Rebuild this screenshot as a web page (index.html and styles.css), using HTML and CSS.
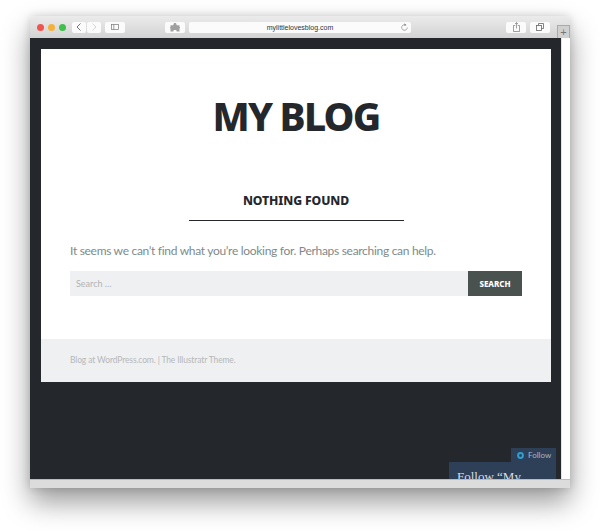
FILE: index.html
```html
<!DOCTYPE html>
<html lang="en">

<head>
  <meta charset="UTF-8">
  <meta name="viewport" content="width=device-width, initial-scale=1.0">
  <title>My Blog</title>
  <link rel="stylesheet" href="styles.css">
</head>

<body>
  <div class="window">
    <div class="toolbar">
      <div class="lights">
        <span class="light red"></span>
        <span class="light yellow"></span>
        <span class="light green"></span>
      </div>
      <div class="nav-group">
        <span class="tool-btn nav-btn">
          <svg width="6" height="8" viewBox="0 0 6 8" fill="none"><path d="M4.5 0.5L1 4L4.5 7.5" stroke="#666" stroke-width="0.9" /></svg>
        </span>
        <span class="tool-btn nav-btn">
          <svg width="6" height="8" viewBox="0 0 6 8" fill="none"><path d="M1.5 0.5L5 4L1.5 7.5" stroke="#cfcfcf" stroke-width="0.9" /></svg>
        </span>
      </div>
      <span class="tool-btn wide-btn sidebar-btn">
        <svg width="8" height="6" viewBox="0 0 8 6" fill="none"><rect x="0.5" y="0.5" width="7" height="5" stroke="#777" stroke-width="0.7" /><path d="M2.8 0.5V5.5" stroke="#777" stroke-width="0.7" /></svg>
      </span>
      <span class="tool-btn wide-btn puzzle-btn">
        <svg width="10" height="9" viewBox="0 0 10 9"><path d="M0.5 2.2H3.5C3.2 1 3.8 0 5 0S6.8 1 6.5 2.2H9.5V4C10.2 3.8 10.2 5.4 9.5 5.2V8.5H6.6C6.9 7.6 6.2 7 5 7S3.1 7.6 3.4 8.5H0.5V5.6C-0.2 5.8 -0.2 3.8 0.5 4Z" fill="#a0a0a0" /></svg>
      </span>
      <div class="address">
        <span class="url">mylittlelovesblog.com</span>
        <svg class="reload" width="7" height="8" viewBox="0 0 7 8" fill="none"><path d="M5.1 2.2A2.8 2.8 0 1 0 6.3 4.5" stroke="#888" stroke-width="0.7" /><path d="M3.4 0.2L5.4 1.9L3.4 3Z" fill="#888" /></svg>
      </div>
      <span class="tool-btn wide-btn share-btn">
        <svg width="7" height="10" viewBox="0 0 7 10" fill="none"><path d="M2.2 3.5H0.5V9.5H6.5V3.5H4.8" stroke="#777" stroke-width="0.7" /><path d="M3.5 0.6V6.5M2 2L3.5 0.6L5 2" stroke="#777" stroke-width="0.7" /></svg>
      </span>
      <span class="tool-btn wide-btn tabs-btn">
        <svg width="8" height="8" viewBox="0 0 8 8" fill="none"><rect x="0.5" y="2.5" width="5" height="5" stroke="#666" stroke-width="0.8" /><path d="M2.5 2.5V0.5H7.5V5.5H5.5" stroke="#666" stroke-width="0.8" /></svg>
      </span>
      <span class="new-tab">+</span>
    </div>

    <div class="viewport">
      <div class="page">
        <div class="card">
          <header class="site-header">
            <h1 class="site-title">MY BLOG</h1>
          </header>
          <main class="content">
            <h2 class="page-title">NOTHING FOUND</h2>
            <p class="message">It seems we can’t find what you’re looking for. Perhaps searching can help.</p>
            <form class="search-form">
              <input class="search-field" type="text" placeholder="Search …">
              <button class="search-submit" type="button">SEARCH</button>
            </form>
          </main>
          <footer class="site-footer">Blog at WordPress.com. | The Illustratr Theme.</footer>
        </div>
      </div>
      <div class="scrollbar"></div>
      <div class="follow-tab">
        <svg width="7" height="7" viewBox="0 0 7 7" fill="none"><circle cx="3.5" cy="3.5" r="2.4" stroke="#2a9fd6" stroke-width="2" /></svg>
        <span>Follow</span>
      </div>
      <div class="follow-panel">Follow “My</div>
    </div>

    <div class="status-bar"></div>
  </div>
</body>

</html>
```

FILE: styles.css
```css
html, body {
  margin: 0;
  height: 531px;
  overflow: hidden;
  background: #fff;
}

.window {
  margin: 16px 0 0 30px;
  width: 540px;
  height: 472px;
  display: flex;
  flex-direction: column;
  border-radius: 4px 4px 2px 2px;
  overflow: hidden;
  font-family: Lato, sans-serif;
  box-shadow: 0 14px 28px rgba(0, 0, 0, 0.4), 0 0 9px rgba(0, 0, 0, 0.15);
}

.toolbar {
  height: 22px;
  flex-shrink: 0;
  display: flex;
  align-items: center;
  padding-left: 7px;
  background: linear-gradient(#ebebeb, #d3d3d3);
  position: relative;
}

.lights {
  display: flex;
  gap: 4px;
}

.light {
  width: 7px;
  height: 7px;
  border-radius: 50%;
}

.red { background: #f0544f; }
.yellow { background: #f5b13c; }
.green { background: #3fc04a; }

.tool-btn {
  height: 11px;
  display: flex;
  align-items: center;
  justify-content: center;
  background: #fbfbfb;
  border-radius: 2px;
}

.nav-group {
  display: flex;
  gap: 1px;
  margin-left: 6px;
}

.nav-btn { width: 14px; }
.wide-btn { width: 20px; }
.sidebar-btn { margin-left: 4px; }
.puzzle-btn { margin-left: 40px; }

.address {
  width: 222px;
  height: 11px;
  margin-left: 4px;
  background: #fbfbfb;
  border-radius: 2px;
  display: flex;
  align-items: center;
  justify-content: center;
  position: relative;
  font-family: "Liberation Sans", sans-serif;
  font-size: 7px;
  color: #333;
}

.reload {
  position: absolute;
  right: 3px;
  top: 1px;
}

.share-btn { margin-left: 95px; }
.tabs-btn { margin-left: 4px; }

.new-tab {
  position: absolute;
  right: 0;
  bottom: 0;
  width: 13px;
  height: 13px;
  box-sizing: border-box;
  border: 1px solid #aaa;
  border-bottom: none;
  background: #d0d0d0;
  color: #777;
  font-family: "Liberation Sans", sans-serif;
  font-size: 11px;
  line-height: 12px;
  text-align: center;
}

.viewport {
  flex: 1;
  display: flex;
  background: #24272c;
  position: relative;
  overflow: hidden;
}

.page {
  flex: 1;
  padding: 11px 10px 0 11px;
}

.scrollbar {
  width: 9px;
  background: #fff;
  border-left: 1px solid #e4e4e4;
  box-sizing: border-box;
}

.card {
  background: #fff;
  height: 333px;
  display: flex;
  flex-direction: column;
}

.site-header {
  height: 143px;
  flex-shrink: 0;
  text-align: center;
}

.site-title {
  margin: 0;
  padding-top: 42px;
  font-family: "Noto Sans", sans-serif;
  font-size: 39px;
  line-height: 50px;
  font-weight: 800;
  color: #24272c;
  letter-spacing: -1.8px;
}

.content {
  flex: 1;
  padding: 0 29px;
}

.page-title {
  width: 215px;
  margin: 0 auto;
  padding: 0 0 10px;
  border-bottom: 1px solid #24272c;
  text-align: center;
  font-family: "Noto Sans", sans-serif;
  font-size: 12.2px;
  line-height: 18px;
  font-weight: 800;
  color: #24272c;
  letter-spacing: -0.1px;
}

.message {
  margin: 22px 0 0;
  font-size: 12px;
  line-height: 16px;
  letter-spacing: -0.3px;
  color: #7d8a8c;
}

.search-form {
  display: flex;
  margin-top: 12px;
  height: 25px;
}

.search-field {
  flex: 1;
  min-width: 0;
  border: none;
  padding: 0 6px;
  background: #eff0f2;
  font-family: inherit;
  font-size: 9px;
}

.search-field::placeholder {
  color: #b0b3b5;
}

.search-submit {
  width: 54px;
  border: none;
  padding: 0;
  background: #4a5250;
  color: #fff;
  font-family: "Noto Sans", sans-serif;
  font-size: 8px;
  font-weight: 800;
}

.site-footer {
  height: 43px;
  flex-shrink: 0;
  padding-left: 29px;
  background: #eff0f2;
  color: #b4b8ba;
  font-size: 8.5px;
  letter-spacing: -0.13px;
  line-height: 43px;
}

.follow-tab {
  position: absolute;
  top: 410px;
  right: 14px;
  width: 45px;
  height: 14px;
  display: flex;
  align-items: center;
  gap: 4px;
  padding-left: 6px;
  box-sizing: border-box;
  background: #2e4057;
  color: #a9b4c0;
  font-size: 8px;
}

.follow-panel {
  position: absolute;
  top: 424px;
  right: 14px;
  width: 107px;
  height: 30px;
  box-sizing: border-box;
  padding: 7px 0 0 8px;
  background: #2e4057;
  color: #d5dce3;
  font-family: "Liberation Serif", serif;
  font-size: 13px;
  line-height: 16px;
}

.status-bar {
  height: 9px;
  flex-shrink: 0;
  background: #dcdcdc;
  border-top: 1px solid #bbb;
  box-sizing: border-box;
}
```
